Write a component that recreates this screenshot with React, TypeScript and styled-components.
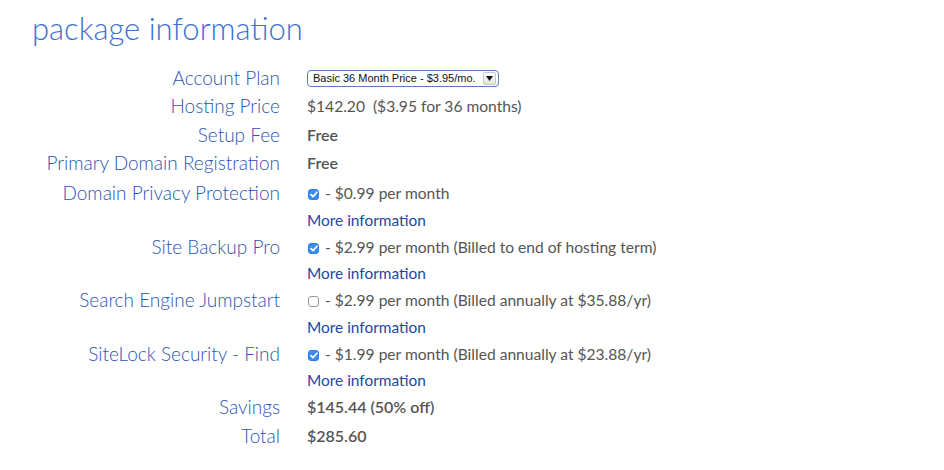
import React from "react";
import styled, { createGlobalStyle } from "styled-components";

const GlobalStyle = createGlobalStyle`
  body {
    margin: 0;
    background: #ffffff;
    font-family: Lato, "Open Sans", sans-serif;
  }
`;

interface Addon {
  label: string;
  checked: boolean;
  text: string;
}

const addons: Addon[] = [
  { label: "Domain Privacy Protection", checked: true, text: "- $0.99 per month" },
  { label: "Site Backup Pro", checked: true, text: "- $2.99 per month (Billed to end of hosting term)" },
  { label: "Search Engine Jumpstart", checked: false, text: "- $2.99 per month (Billed annually at $35.88/yr)" },
  { label: "SiteLock Security - Find", checked: true, text: "- $1.99 per month (Billed annually at $23.88/yr)" },
];

const App: React.FC = () => {
  return (
    <>
      <GlobalStyle />
      <Page>
        <Title>package information</Title>
        <Table>
          <Label>Account Plan</Label>
          <Value>
            <Select>
              <span>Basic 36 Month Price - $3.95/mo.</span>
              <Arrow>
                <svg width="7" height="5" viewBox="0 0 7 5">
                  <path d="M0 0h7L3.5 5z" fill="#111" />
                </svg>
              </Arrow>
            </Select>
          </Value>

          <Label>Hosting Price</Label>
          <Value>$142.20&nbsp; ($3.95 for 36 months)</Value>

          <Label>Setup Fee</Label>
          <Value $bold>Free</Value>

          <Label>Primary Domain Registration</Label>
          <Value $bold>Free</Value>

          {addons.map((a, i) => (
            <React.Fragment key={a.label}>
              <Label $first={i === 0}>{a.label}</Label>
              <Value $first={i === 0}>
                <Check $checked={a.checked}>
                  {a.checked && (
                    <svg width="8" height="7" viewBox="0 0 8 7">
                      <path d="M1 3.6l2 2L7 1.2" stroke="#fff" strokeWidth="1.6" fill="none" strokeLinecap="round" strokeLinejoin="round" />
                    </svg>
                  )}
                </Check>
                {a.text}
              </Value>
              <span />
              <MoreInfo>More information</MoreInfo>
            </React.Fragment>
          ))}

          <Label>Savings</Label>
          <Value $bold>$145.44 (50% off)</Value>

          <Label>Total</Label>
          <Value $bold>$285.60</Value>
        </Table>
      </Page>
    </>
  );
};

const Page = styled.div`
  padding: 8px 0 0 32px;
  width: 944px;
  height: 470px;
  box-sizing: border-box;
`;

const Title = styled.h1`
  margin: 0 0 15.75px 0;
  font-family: Lato, sans-serif;
  font-weight: 300;
  font-size: 31px;
  line-height: 40px;
  color: #3c6fd2;
`;

const Table = styled.div`
  display: grid;
  grid-template-columns: 248px 1fr;
  column-gap: 27px;
  align-items: center;
`;

const Label = styled.div<{ $first?: boolean }>`
  text-align: right;
  font-size: 19px;
  font-weight: 300;
  line-height: 28.5px;
  padding-top: ${(p) => (p.$first ? "1.5px" : "0")};
  color: #2b55b3;
  white-space: nowrap;
`;

const Value = styled.div<{ $bold?: boolean; $first?: boolean }>`
  display: flex;
  align-items: center;
  font-size: ${(p) => (p.$bold ? "16px" : "15.6px")};
  line-height: 28.5px;
  padding-top: ${(p) => (p.$first ? "1.5px" : "0")};
  font-weight: ${(p) => (p.$bold ? 600 : 400)};
  color: #555555;
  white-space: nowrap;
`;

const MoreInfo = styled.a`
  font-size: 15.4px;
  line-height: 25px;
  color: #23489f;
  cursor: pointer;
`;

const Select = styled.div`
  display: inline-flex;
  align-items: center;
  justify-content: space-between;
  box-sizing: border-box;
  width: 192px;
  height: 17px;
  padding: 0 2px 0 5px;
  border: 1px solid #5a7fc0;
  border-radius: 4px;
  font-family: "Liberation Sans", Arial, sans-serif;
  font-size: 11px;
  color: #111;
  background: #fff;
`;

const Arrow = styled.span`
  display: inline-flex;
  align-items: center;
  justify-content: center;
  width: 11px;
  height: 11px;
  background: linear-gradient(#fff, #e4e4e4);
  border: 1px solid #c8c8c8;
  border-radius: 2px;
`;

const Check = styled.span<{ $checked: boolean }>`
  display: inline-flex;
  align-items: center;
  justify-content: center;
  box-sizing: border-box;
  width: 11px;
  height: 11px;
  margin: 2px 6px 0 1px;
  border-radius: 3px;
  background: ${(p) => (p.$checked ? "#3b8df1" : "#fff")};
  border: 1px solid ${(p) => (p.$checked ? "#2f7fe6" : "#9a9a9a")};
`;

export default App;
